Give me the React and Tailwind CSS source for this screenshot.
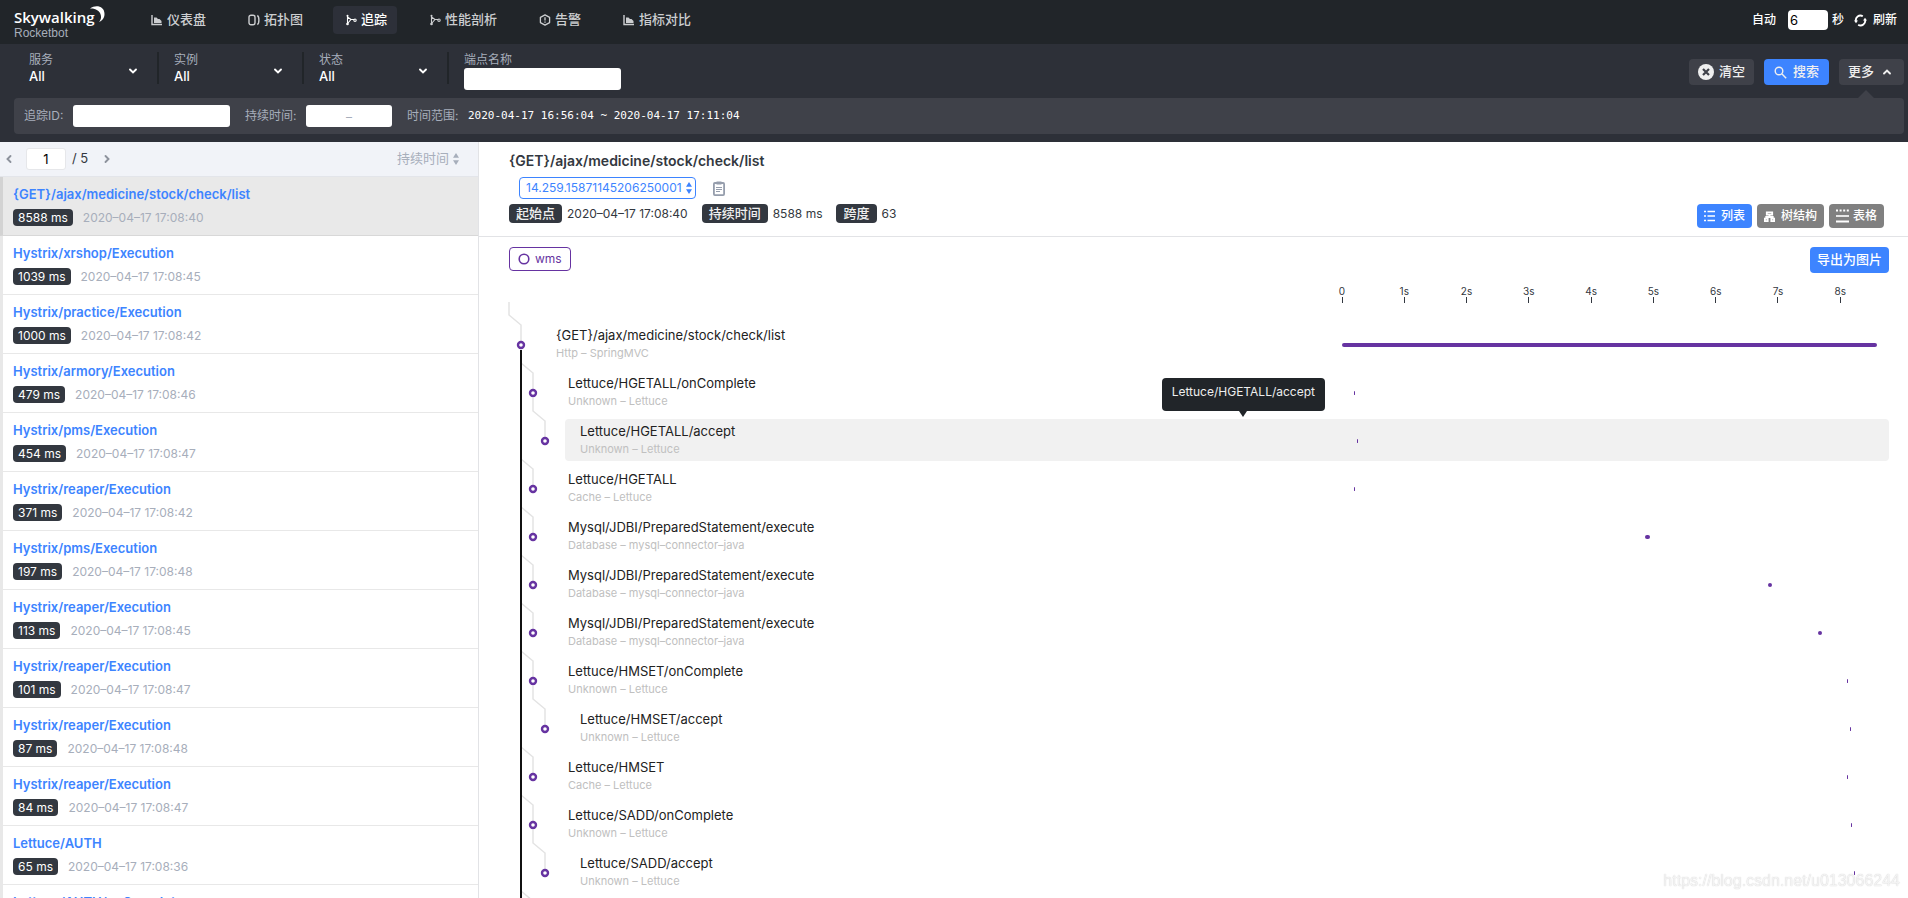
import React from 'react';

const NAV = [
  { label: '仪表盘', icon: 'chart' },
  { label: '拓扑图', icon: 'topology' },
  { label: '追踪', icon: 'trace', active: true },
  { label: '性能剖析', icon: 'trace' },
  { label: '告警', icon: 'alarm' },
  { label: '指标对比', icon: 'chart' },
];

const FILTERS = ['服务', '实例', '状态'];

const TRACES = [
  { name: '{GET}/ajax/medicine/stock/check/list', duration: 8588, time: '2020–04–17 17:08:40', active: true },
  { name: 'Hystrix/xrshop/Execution', duration: 1039, time: '2020–04–17 17:08:45' },
  { name: 'Hystrix/practice/Execution', duration: 1000, time: '2020–04–17 17:08:42' },
  { name: 'Hystrix/armory/Execution', duration: 479, time: '2020–04–17 17:08:46' },
  { name: 'Hystrix/pms/Execution', duration: 454, time: '2020–04–17 17:08:47' },
  { name: 'Hystrix/reaper/Execution', duration: 371, time: '2020–04–17 17:08:42' },
  { name: 'Hystrix/pms/Execution', duration: 197, time: '2020–04–17 17:08:48' },
  { name: 'Hystrix/reaper/Execution', duration: 113, time: '2020–04–17 17:08:45' },
  { name: 'Hystrix/reaper/Execution', duration: 101, time: '2020–04–17 17:08:47' },
  { name: 'Hystrix/reaper/Execution', duration: 87, time: '2020–04–17 17:08:48' },
  { name: 'Hystrix/reaper/Execution', duration: 84, time: '2020–04–17 17:08:47' },
  { name: 'Lettuce/AUTH', duration: 65, time: '2020–04–17 17:08:36' },
  { name: 'Lettuce/AUTH/onComplete', duration: 65, time: '2020–04–17 17:08:36' },
];

// start and length are in ms
const SPANS = [
  { name: '{GET}/ajax/medicine/stock/check/list', kind: 'Http – SpringMVC', level: 0, start: 0, length: 8588 },
  { name: 'Lettuce/HGETALL/onComplete', kind: 'Unknown – Lettuce', level: 1, start: 193, length: 2 },
  { name: 'Lettuce/HGETALL/accept', kind: 'Unknown – Lettuce', level: 2, start: 241, length: 1, active: true },
  { name: 'Lettuce/HGETALL', kind: 'Cache – Lettuce', level: 1, start: 193, length: 2 },
  { name: 'Mysql/JDBI/PreparedStatement/execute', kind: 'Database – mysql–connector–java', level: 1, start: 4864, length: 78 },
  { name: 'Mysql/JDBI/PreparedStatement/execute', kind: 'Database – mysql–connector–java', level: 1, start: 6843, length: 56 },
  { name: 'Mysql/JDBI/PreparedStatement/execute', kind: 'Database – mysql–connector–java', level: 1, start: 7645, length: 56 },
  { name: 'Lettuce/HMSET/onComplete', kind: 'Unknown – Lettuce', level: 1, start: 8106, length: 1 },
  { name: 'Lettuce/HMSET/accept', kind: 'Unknown – Lettuce', level: 2, start: 8154, length: 1 },
  { name: 'Lettuce/HMSET', kind: 'Cache – Lettuce', level: 1, start: 8106, length: 1 },
  { name: 'Lettuce/SADD/onComplete', kind: 'Unknown – Lettuce', level: 1, start: 8170, length: 1 },
  { name: 'Lettuce/SADD/accept', kind: 'Unknown – Lettuce', level: 2, start: 8218, length: 1 },
  { name: 'Lettuce/SADD', kind: 'Cache – Lettuce', level: 1, start: 8170, length: 1 },
];

const TOTAL = 8588;
const TICKS = ['0', '1s', '2s', '3s', '4s', '5s', '6s', '7s', '8s'];

const NavIcon = ({ type }) => {
  const common = { width: 12, height: 12, viewBox: '0 0 12 12', fill: 'none', stroke: 'currentColor' };
  if (type === 'chart') {
    return (
      <svg {...common}>
        <path d="M1 1v9.5h10" strokeWidth="1.4" />
        <path d="M3 9V3.5h2.5L7 5h1.5l2 2v2z" fill="currentColor" stroke="none" />
      </svg>
    );
  }
  if (type === 'topology') {
    return (
      <svg {...common} strokeWidth="1.4">
        <rect x="1" y="1.2" width="6" height="9.6" rx="2" />
        <path d="M9.3 1.5c1.4.6 1.6 1.6 1.6 4.5s-.2 3.9-1.6 4.5" />
      </svg>
    );
  }
  if (type === 'alarm') {
    return (
      <svg {...common} strokeWidth="1.3">
        <path d="M6 .9l4.6 2.5v5.2L6 11.1 1.4 8.6V3.4z" strokeLinejoin="round" />
        <path d="M6 3.3v3.2M6 7.5v1.3" />
      </svg>
    );
  }
  return (
    <svg {...common} strokeWidth="1.1">
      <path d="M2.5 2v8M2.5 9.5L6 5.5h3.5M2.5 3l3.5 2.5" />
      <circle cx="2.5" cy="1.8" r="1" fill="currentColor" stroke="none" />
      <circle cx="2.5" cy="10" r="1.3" fill="currentColor" stroke="none" />
      <circle cx="10" cy="6.2" r="1.2" />
    </svg>
  );
};

const Caret = ({ dir = 'down', className = '' }) => {
  const paths = { down: 'M2 3.5l3 3 3-3', up: 'M2 6.5l3-3 3 3', left: 'M6.5 2l-3 3 3 3', right: 'M3.5 2l3 3-3 3' };
  return (
    <svg className={className} width="10" height="10" viewBox="0 0 10 10" fill="none" stroke="currentColor" strokeWidth="1.9" strokeLinecap="round">
      <path d={paths[dir]} />
    </svg>
  );
};

const SortIcon = () => (
  <svg width="6" height="12" viewBox="0 0 6 12" fill="currentColor">
    <path d="M3 0l3 4.8H0zM3 12l3-4.8H0z" />
  </svg>
);

const Header = () => (
  <header className="flex h-11 flex-none items-center bg-[#212529] pl-[14px] pr-[11px] text-[#ccced0]">
    <div className="relative w-[125px] flex-none pt-px">
      <div className="font-['Open_Sans'] text-[15px] font-semibold leading-5 text-white">Skywalking</div>
      <svg className="absolute left-[75px] top-0" width="16" height="17" viewBox="0 0 16 17" fill="#fff">
        <path d="M1 2.6C7-1.8 15.500.4 15.500 8c0 3.800-2.300 6.800-5.500 8 1.700-2 2.600-4.600 1.600-7.600C10.300 4.700 6.500 2.200 1 2.600z" />
      </svg>
      <div className="font-['Liberation_Sans'] text-xs leading-3 text-[#a7aebb]">Rocketbot</div>
    </div>
    <nav className="flex gap-5 pb-1">
      {NAV.map((item) => (
        <a
          key={item.label}
          href="#"
          className={`flex h-7 items-center gap-1 rounded pl-3 pr-[10px] text-[13px] font-medium ${
            item.active ? 'bg-[#2d3039] text-white' : ''
          }`}
        >
          <NavIcon type={item.icon} />
          {item.label}
        </a>
      ))}
    </nav>
    <div className="ml-auto flex items-center pb-1 text-xs font-medium text-white">
      <label htmlFor="auto" className="mr-3">自动</label>
      <input id="auto" defaultValue="6" className="h-5 w-10 rounded-sm bg-white px-0.5 text-[13px] font-normal text-black" />
      <span className="ml-1">秒</span>
      <button className="ml-[10px] flex items-center gap-[6px]">
        <svg width="13" height="13" viewBox="0 0 13 13" fill="none" stroke="currentColor" strokeWidth="1.9">
          <path d="M2 7.5A4.600 4.600 0 0 1 8.800 2.300M11 5.500a4.600 4.600 0 0 1-6.800 5.200" />
          <path d="M0 6.500h4L2 9.300zM9 6.500h4L11 3.700z" fill="currentColor" stroke="none" />
        </svg>
        刷新
      </button>
    </div>
  </header>
);

const SearchBar = () => (
  <section className="flex-none bg-[#2d3038] pb-2 pl-[14px] pr-1 pt-2">
    <div className="flex h-[46px]">
      {FILTERS.map((label) => (
        <button key={label} className="flex w-[145px] pl-[15px] text-left">
          <span className="flex-1">
            <span className="block text-xs leading-4 text-[#a7aebb]">{label}</span>
            <span className="block text-[13px] font-medium leading-4 text-white">All</span>
          </span>
          <Caret className="mr-[19px] mt-[14px] text-white" />
          <span className="h-8 w-0.5 bg-[#212529]" />
        </button>
      ))}
      <div className="pl-[15px]">
        <label htmlFor="endpoint" className="block text-xs leading-4 text-[#a7aebb]">端点名称</label>
        <input id="endpoint" className="block h-[22px] w-[157px] rounded-[3px] bg-white px-2 text-xs" />
      </div>
      <div className="ml-auto flex gap-[10px] pt-[7px] text-[13px] font-medium text-[#efefef]">
        <button className="flex h-[26px] w-[65px] flex-none items-center justify-center gap-[5px] rounded bg-[#3f4149]">
          <svg width="16" height="16" viewBox="0 0 16 16">
            <circle cx="8" cy="8" r="8" fill="#efefef" />
            <path d="M5 5l6 6M11 5l-6 6" stroke="#3f4149" strokeWidth="2.2" />
          </svg>
          清空
        </button>
        <button className="flex h-[26px] w-[65px] flex-none items-center justify-center gap-[6px] rounded bg-[#3d84ff]">
          <svg width="13" height="13" viewBox="0 0 13 13" fill="none" stroke="currentColor" strokeWidth="1.4">
            <circle cx="5" cy="5" r="3.8" />
            <path d="M8 8l4.2 4.2" />
          </svg>
          搜索
        </button>
        <button className="relative flex h-[26px] w-[65px] flex-none items-center gap-2 rounded bg-[#3f4149] pl-[9px]">
          更多
          <Caret dir="up" />
          <svg className="absolute left-[19px] top-[31px]" width="16" height="8" viewBox="0 0 16 8">
            <path d="M8 0l8 8H0z" fill="#3f4149" />
          </svg>
        </button>
      </div>
    </div>
    <div className="flex h-9 items-center rounded bg-[#3f4149] pl-[10px] text-xs text-[#a7aebb]">
      <label htmlFor="trace-id" className="w-[49px]">追踪ID:</label>
      <input id="trace-id" className="h-[22px] w-[157px] rounded-[3px] bg-white px-2" />
      <label htmlFor="duration" className="ml-[15px] w-[61px]">持续时间:</label>
      <input id="duration" defaultValue="–" className="h-[22px] w-[86px] rounded-[3px] bg-white text-center" />
      <span className="ml-[15px] w-[61px]">时间范围:</span>
      <span className="font-['DejaVu_Sans_Mono'] text-[11px] text-white">2020-04-17 16:56:04 ~ 2020-04-17 17:11:04</span>
    </div>
  </section>
);

const TraceList = () => (
  <aside className="flex w-[479px] flex-none flex-col overflow-hidden border-r border-[#e2e3e6]">
    <div className="flex h-[35px] flex-none items-center border-b border-[#e3e5ea] bg-[#f1f3f8] text-[13px] text-[#333840]">
      <button aria-label="prev" className="ml-1 text-[#8d929c]"><Caret dir="left" /></button>
      <input aria-label="page" defaultValue="1" className="ml-3 h-[22px] w-10 rounded-[3px] border border-[#e6e7ea] bg-white text-center text-black" />
      <span className="ml-[6px] w-5">/ 5</span>
      <button aria-label="next" className="ml-[10px] text-[#8d929c]"><Caret dir="right" /></button>
      <button className="ml-auto mr-[19px] flex items-center gap-1 text-[#a7aebb]">
        持续时间
        <SortIcon />
      </button>
    </div>
    <ul>
      {TRACES.map((trace, i) => (
        <li
          key={i}
          className={`h-[59px] border-b border-l-[3px] pl-[10px] pt-[7px] ${
            trace.active ? 'border-b-[#d8d8d8] border-l-[#d3d3d3] bg-[#e9e9e9]' : 'border-b-[#e8e8e8] border-l-[#e8e8e8]'
          }`}
        >
          <a href="#" className="block text-[13px] font-semibold leading-5 text-[#3d84ff]">{trace.name}</a>
          <div className="mt-[5px] flex items-center text-xs leading-[17px] text-[#a7aebb]">
            <span className="mr-[10px] rounded bg-[#333840] px-[5px] text-white">{trace.duration} ms</span>
            {trace.time}
          </div>
        </li>
      ))}
    </ul>
  </aside>
);

const Tag = ({ label, children }) => (
  <div className="flex items-center gap-[5px]">
    <span className="h-[19px] rounded bg-[#333840] px-[7px] text-[13px] font-medium leading-[18px] text-[#efefef]">{label}</span>
    {children}
  </div>
);

const TraceHead = () => (
  <div className="flex h-[95px] flex-none items-start justify-between border-b border-[#e2e3e6] pl-[30px] pr-6 pt-[9px] text-[#333840]">
    <div>
      <h2 className="text-sm font-semibold leading-5">{'{GET}'}/ajax/medicine/stock/check/list</h2>
      <div className="ml-[10px] mt-[6px] flex items-center">
        <div className="relative h-[22px] w-[177px] text-[#3d84ff]">
          <select
            aria-label="trace id"
            className="block h-full w-full appearance-none rounded border border-[#3d84ff] bg-white pl-[6px] text-xs leading-5"
          >
            <option>14.259.15871145206250001</option>
          </select>
          <span className="pointer-events-none absolute right-1 top-[5px]"><SortIcon /></span>
        </div>
        <button aria-label="copy" className="ml-[17px]">
          <svg width="12" height="15" viewBox="0 0 12 15" fill="none" stroke="#959dac">
            <rect x="0.9" y="2" width="10.2" height="12.1" rx="1" strokeWidth="1.8" />
            <path d="M3.5 2h5" strokeWidth="3" />
            <path d="M3 6.5h6M3 8.5h6M3 10.5h4" />
          </svg>
        </button>
      </div>
      <div className="mt-[5px] flex gap-[14px] text-xs leading-[19px]">
        <Tag label="起始点">2020–04–17 17:08:40</Tag>
        <Tag label="持续时间">8588 ms</Tag>
        <Tag label="跨度">63</Tag>
      </div>
    </div>
    <div className="flex gap-[5px] self-end pb-2 text-xs font-medium text-white">
      <button className="flex h-6 items-center gap-[6px] rounded bg-[#3d84ff] px-[7px]">
        <svg width="11" height="12" viewBox="0 0 11 12" stroke="currentColor" strokeWidth="1.3">
          <path d="M0 1.5h2M0 6h2M0 10.5h2M3.500 1.500H11M3.500 6H11M3.500 10.500H11" />
        </svg>
        列表
      </button>
      <button className="flex h-6 items-center gap-[6px] rounded bg-[#808080] px-[7px]">
        <svg width="11" height="11" viewBox="0 0 11 11" fill="none" stroke="currentColor" strokeWidth="1.8">
          <path d="M2.8 1.3h5.4v2.4H2.8zM5.500 4v2M2.200 8V6h6.600v2" />
          <rect x="0.9" y="7.6" width="2.8" height="2.5" />
          <rect x="7.3" y="7.6" width="2.8" height="2.5" />
        </svg>
        树结构
      </button>
      <button className="flex h-6 items-center gap-1 rounded bg-[#808080] px-[7px]">
        <svg width="13" height="14" viewBox="0 0 13 14" stroke="currentColor">
          <path d="M0 1.5h13" strokeWidth="2" strokeDasharray="2 1.6" />
          <path d="M0 7h13" strokeWidth="1.6" />
          <path d="M0 12.5h13" strokeWidth="2" />
        </svg>
        表格
      </button>
    </div>
  </div>
);

// Node circle with the elbow that joins it to its parent, one per 48px row
const Branch = ({ level }) => {
  const x = 12 + level * 12;
  const px = x - 12;
  return (
    <svg className="flex-none overflow-visible" width={32 + level * 12} height="48" fill="none">
      {level > 0 && <path d="M12 -19V29" stroke="#111" strokeWidth="2" />}
      <path
        d={`M${px} ${level === 1 ? -6 : -19}V-6L${x} 4V20`}
        stroke="#e3e3e3"
        strokeWidth="1.5"
      />
      {level === 1 && <path d="M12 -19V29" stroke="#111" strokeWidth="2" />}
      <circle cx={x} cy="24" r="3" fill="#fff" stroke="#6633a1" strokeWidth="2.4" />
    </svg>
  );
};

const SpanRow = ({ span }) => (
  <li className="relative flex h-12 items-start">
    <Branch level={span.level} />
    <div className={`mt-0.5 flex h-[42px] min-w-0 flex-1 items-center rounded-sm pl-[15px] ${span.active ? 'bg-[#f1f1f1]' : ''}`}>
      <div className="flex-1 pb-0.5">
        <div className="text-[13px] leading-5 text-[#222]">{span.name}</div>
        <div className="text-[11px] leading-4 text-[#c0c0c0]">{span.kind}</div>
      </div>
      <div className="w-[547px] flex-none pr-3 pt-0.5">
        <div
          className="h-1 min-w-px rounded-xs bg-[#6633a1]"
          style={{ marginLeft: `${(span.start / TOTAL) * 100}%`, width: `${(span.length / TOTAL) * 100}%` }}
        />
      </div>
    </div>
    {span.active && (
      <div role="tooltip" className="absolute bottom-full right-[564px] mb-[6px] rounded bg-[#212529] px-[10px] pb-[9px] pt-1 text-xs leading-5 text-[#eee]">
        {span.name}
        <svg className="absolute left-1/2 top-full -translate-x-1/2" width="8" height="6" viewBox="0 0 8 6">
          <path d="M0 0h8L4 6z" fill="#212529" />
        </svg>
      </div>
    )}
  </li>
);

const TraceDetail = () => (
  <div className="min-h-0 flex-1 overflow-hidden pl-[30px] pr-[19px] pt-[10px]">
    <div className="flex items-start justify-between">
      <div className="flex h-6 items-center gap-[5px] rounded border border-[#6633a1] px-2 text-xs text-[#6633a1]">
        <svg width="12" height="12" viewBox="0 0 12 12" fill="none" stroke="currentColor" strokeWidth="1.6">
          <circle cx="6" cy="6" r="4.8" />
        </svg>
        wms
      </div>
      <button className="h-[26px] rounded bg-[#3d84ff] px-[7px] text-[13px] font-medium text-white">导出为图片</button>
    </div>
    <div className="mt-3 flex h-9 justify-end pr-3">
      <div className="flex w-[535px]">
        {TICKS.map((tick) => (
          <div key={tick} className="flex-none" style={{ width: `${(1000 / TOTAL) * 100}%` }}>
            <div className="flex w-5 -translate-x-1/2 flex-col items-center text-[10px] leading-3 text-[#333840]">
              {tick}
              <span className="h-[6px] w-px bg-[#333840]" />
            </div>
          </div>
        ))}
      </div>
    </div>
    <ul>
      {SPANS.map((span, i) => (
        <SpanRow key={i} span={span} />
      ))}
    </ul>
  </div>
);

const App = () => (
  <div className="flex h-screen flex-col overflow-hidden bg-white font-['Inter','Noto_Sans_CJK_SC',sans-serif]">
    <Header />
    <SearchBar />
    <main className="flex min-h-0 flex-1">
      <TraceList />
      <section className="flex min-w-0 flex-1 flex-col">
        <TraceHead />
        <TraceDetail />
      </section>
    </main>
    <div className="pointer-events-none fixed bottom-[5px] right-2 font-['Liberation_Sans'] text-base leading-6 text-white/80 [text-shadow:0_0_1px_#bbb]">
      https://blog.csdn.net/u013066244
    </div>
  </div>
);

export default App;
